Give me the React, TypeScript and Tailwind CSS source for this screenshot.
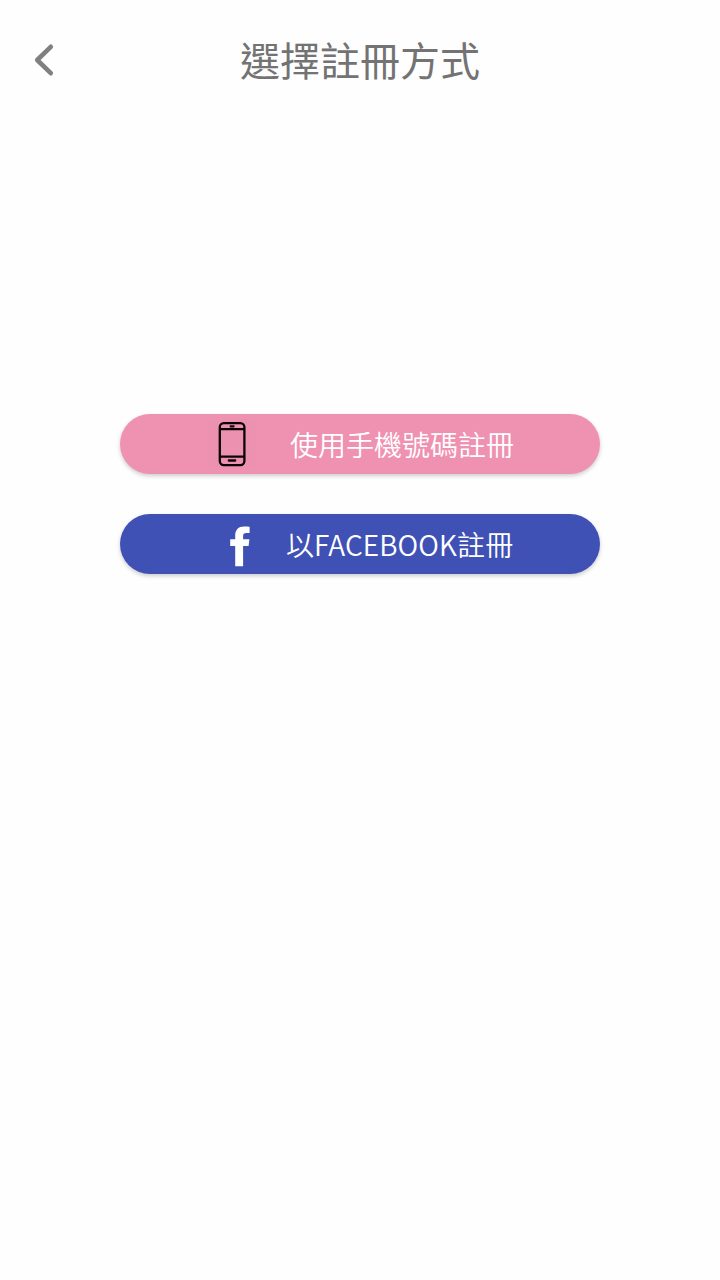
import React from "react";

function BackIcon() {
  return (
    <svg className="h-10 w-10" viewBox="0 0 40 40" fill="none">
      <path d="M26.8 6.8 13.2 20l13.6 13.2" stroke="#808080" strokeWidth="4.6" strokeLinecap="round" strokeLinejoin="round" />
    </svg>
  );
}

function PhoneIcon() {
  return (
    <svg className="h-[50px] w-[50px] bg-[#ed91b0]" viewBox="0 0 50 50" fill="none" stroke="#0b0306" strokeWidth="2.3">
      <rect x="12.8" y="4.1" width="24.6" height="42" rx="4" />
      <path d="M12.7 10.2h24.9M12.7 37.6h24.9" />
      <path d="M23.7 7.4h2.8M21.8 41.5h6.4" strokeLinecap="round" />
    </svg>
  );
}

function FacebookIcon() {
  return (
    <svg className="h-[50px] w-[50px]" viewBox="0 0 50 50" fill="#fff">
      <path d="M23.2 47.2V27h-5v-6.8h5v-3.6c0-6 3.2-9.2 9-9.2 2.2 0 4.1.2 5.4.4v6.1h-2.6c-3.2 0-3.9 1.2-3.9 3.3v3h6.3l-.8 6.8h-5.5v20.2z" />
    </svg>
  );
}

interface SignupButtonProps {
  className: string;
  icon: React.ReactNode;
  label: string;
}

function SignupButton({ className, icon, label }: SignupButtonProps) {
  return (
    <button
      className={`flex h-[60px] w-[480px] items-center rounded-full text-[28px] leading-none font-[350] whitespace-nowrap text-white shadow-[0_2px_4px_rgba(0,0,0,0.2)] ${className}`}
    >
      {icon}
      <span>{label}</span>
    </button>
  );
}

export default function App() {
  return (
    <div className="flex min-h-screen w-full flex-col bg-[#fefefe] font-['Noto_Sans_CJK_TC',sans-serif]">
      <header className="grid h-[120px] grid-cols-[88px_1fr_88px] items-center">
        <button className="flex justify-center" aria-label="返回">
          <BackIcon />
        </button>
        <h1 className="pb-[2px] text-center text-[40px] leading-[60px] font-normal text-[#737373]">選擇註冊方式</h1>
      </header>
      <main className="flex flex-col items-center gap-10 pt-[294px]">
        <SignupButton className="gap-[33px] bg-[#ef92b2] pl-[87px]" icon={<PhoneIcon />} label="使用手機號碼註冊" />
        <SignupButton className="gap-[24px] bg-[#3f51b5] pl-[92px] tracking-[0.1px]" icon={<FacebookIcon />} label="以FACEBOOK註冊" />
      </main>
    </div>
  );
}
